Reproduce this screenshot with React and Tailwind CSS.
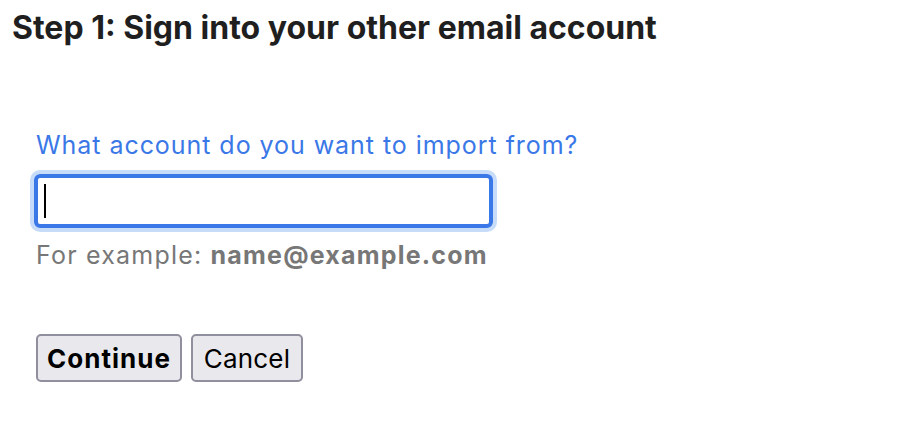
export default function App() {
  return (
    <div className="w-[912px] h-[448px] bg-white overflow-hidden" style={{ fontFamily: "Inter, 'Noto Sans', sans-serif" }}>
      <h1 className="pl-[12px] pt-[10px] text-[32px] leading-[36px] font-bold text-[#1f1f1f]">
        Step 1: Sign into your other email account
      </h1>
      <div className="pl-[36px] pt-[84px]">
        <div className="text-[25px] leading-[30px] text-[#3b78e7] tracking-[0.95px]">What account do you want to import from?</div>
        <div className="mt-[14px] -ml-[2px] w-[459px] h-[54px] rounded-[6px] border-[4px] border-[#3b78e7] ring-[4px] ring-[#c7dcf9] flex items-center pl-[6px]">
          <div className="w-[2px] h-[34px] bg-black" />
        </div>
        <div className="mt-[12px] text-[25px] leading-[30px] text-[#777777] tracking-[1.2px]">
          For example: <span className="font-bold">name@example.com</span>
        </div>
        <div className="mt-[64px] flex gap-[9px]">
          <button className="h-[48px] w-[146px] rounded-[5px] border-2 border-[#8f8f9d] bg-[#e9e9ed] text-[26px] tracking-[1px] font-bold text-black">
            Continue
          </button>
          <button className="h-[48px] w-[112px] rounded-[5px] border-2 border-[#8f8f9d] bg-[#e9e9ed] text-[26px] tracking-[0.2px] text-black">
            Cancel
          </button>
        </div>
      </div>
    </div>
  );
}
